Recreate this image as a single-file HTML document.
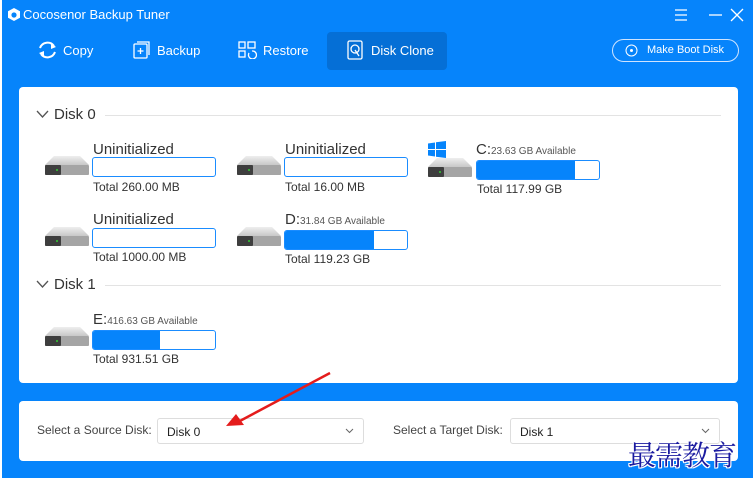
<!DOCTYPE html>
<html><head><style>
*{margin:0;padding:0;box-sizing:border-box}
body{width:753px;height:489px;background:#fff;font-family:"Liberation Sans",sans-serif;position:relative;overflow:hidden}
.bg{position:absolute;left:2px;top:0;width:751px;height:478px;background:#0684fb}
.abs{position:absolute}
.w{color:#fff}
.card{position:absolute;background:#fff;border-radius:4px}
.nav{position:absolute;top:50px;color:#fff;font-size:13px}
.t{position:absolute;font-size:15px;color:#333}
.bar{position:absolute;width:124px;height:20px;border:1px solid #1a8cff;border-radius:3px;background:#fff;overflow:hidden}
.bar i{display:block;height:100%;background:#0684fb}
.tot{position:absolute;font-size:12px;color:#333}
.small{font-size:10px;color:#555}
.hdr{position:absolute;font-size:15px;color:#333}
.drv{position:absolute;width:44px;height:22px}
.sel{position:absolute;height:26px;border:1px solid #ddd;border-radius:3px;font-size:12px;color:#222;padding:6px 9px}
</style></head><body>
<div class="bg"></div>
<svg class="abs" style="left:8px;top:8px" width="12" height="13" viewBox="0 0 12 13"><path d="M6 0L12 3.2V9.8L6 13L0 9.8V3.2Z" fill="#fff"/><circle cx="6" cy="7" r="2.6" fill="#0684fb"/></svg>
<div class="abs w" style="left:23px;top:7px;font-size:13px">Cocosenor Backup Tuner</div>
<svg class="abs" style="left:672px;top:8px" width="75" height="14"><g stroke="#fff" stroke-width="1.3" fill="none"><path d="M3 2H15M3 7H15M3 12H15"/><path d="M37 7H50"/><path d="M59 1L71 13M71 1L59 13"/></g></svg>
<svg class="abs" style="left:37px;top:40px" width="21" height="20" viewBox="0 0 21 20"><g stroke="#fff" stroke-width="2" fill="none"><path d="M3 8A8 8 0 0 1 17 6"/><path d="M18 12A8 8 0 0 1 4 14"/></g><path d="M14 3L19 7L14 9Z M7 17L2 13L7 11Z" fill="#fff"/></svg>
<div class="nav" style="left:63px;top:43px">Copy</div>
<svg class="abs" style="left:133px;top:40px" width="18" height="20"><g stroke="#fff" stroke-width="1.3" fill="none"><rect x="1" y="4" width="13" height="14" rx="1"/><path d="M4 2H16V15"/><path d="M7.5 8V14M4.5 11H10.5"/></g></svg>
<div class="nav" style="left:157px;top:43px">Backup</div>
<svg class="abs" style="left:238px;top:41px" width="19" height="18"><g stroke="#fff" stroke-width="1.3" fill="none"><rect x="1" y="1" width="6" height="6"/><rect x="10" y="1" width="7" height="6"/><rect x="1" y="10" width="6" height="6"/><path d="M11 12A4 4 0 1 0 14 10"/></g></svg>
<div class="nav" style="left:263px;top:43px">Restore</div>
<div class="abs" style="left:327px;top:32px;width:120px;height:38px;background:#056fd6;border-radius:4px"></div>
<svg class="abs" style="left:347px;top:40px" width="16" height="20"><g stroke="#fff" stroke-width="1.3" fill="none"><rect x="1" y="1" width="14" height="18" rx="1.5"/><circle cx="8" cy="9" r="4"/><path d="M8 10L12 16"/></g></svg>
<div class="nav" style="left:371px;top:43px">Disk Clone</div>
<div class="abs" style="left:612px;top:39px;width:127px;height:23px;border:1px solid #cfe4ff;border-radius:12px"></div>
<svg class="abs" style="left:625px;top:44px" width="13" height="13"><circle cx="6.5" cy="6.5" r="5.5" stroke="#fff" fill="none"/><circle cx="6.5" cy="6.5" r="1.5" fill="#fff"/></svg>
<div class="abs w" style="left:647px;top:44px;font-size:11px">Make Boot Disk</div>
<div class="card" style="left:19px;top:87px;width:719px;height:296px"></div>
<svg class="abs" style="left:36px;top:110px" width="13" height="9"><path d="M1 1L6.5 7L12 1" stroke="#555" stroke-width="1.3" fill="none"/></svg>
<div class="hdr" style="left:54px;top:106px">Disk 0</div>
<div class="abs" style="left:105px;top:115px;width:616px;height:1px;background:#e3e3e3"></div>
<svg class="abs" style="left:36px;top:280px" width="13" height="9"><path d="M1 1L6.5 7L12 1" stroke="#555" stroke-width="1.3" fill="none"/></svg>
<div class="hdr" style="left:54px;top:276px">Disk 1</div>
<div class="abs" style="left:105px;top:285px;width:616px;height:1px;background:#e3e3e3"></div>

<svg width="0" height="0" style="position:absolute"><defs><linearGradient id="g" x1="0" y1="0" x2="0" y2="1"><stop offset="0" stop-color="#eee"/><stop offset="1" stop-color="#c8c8c8"/></linearGradient><g id="d"><path d="M9 2H35L44 11H0Z" fill="url(#g)"/><rect x="0" y="11" width="44" height="10" rx="1" fill="#a5a5a5"/><rect x="0" y="11" width="16" height="10" rx="1" fill="#3e3e3e"/><circle cx="12" cy="16" r="1" fill="#3c3"/></g></defs></svg>

<svg class="drv" style="left:45px;top:154px"><use href="#d"/></svg>
<div class="t" style="left:93px;top:141px">Uninitialized</div>
<div class="bar" style="left:92px;top:157px"></div>
<div class="tot" style="left:93px;top:180px">Total 260.00 MB</div>

<svg class="drv" style="left:237px;top:154px"><use href="#d"/></svg>
<div class="t" style="left:285px;top:141px">Uninitialized</div>
<div class="bar" style="left:284px;top:157px"></div>
<div class="tot" style="left:285px;top:180px">Total 16.00 MB</div>

<svg class="abs" style="left:428px;top:141px" width="18" height="18"><g fill="#0684fb"><path d="M0 2.5L7 1.5V8H0Z M8 1.3L18 0V8H8Z M0 9H7V15.5L0 14.5Z M8 9H18V17L8 15.7Z"/></g></svg>
<svg class="drv" style="left:428px;top:156px"><use href="#d"/></svg>
<div class="t" style="left:476px;top:141px">C:<span class="small">23.63 GB Available</span></div>
<div class="bar" style="left:476px;top:160px"><i style="width:98px"></i></div>
<div class="tot" style="left:477px;top:182px">Total 117.99 GB</div>

<svg class="drv" style="left:45px;top:225px"><use href="#d"/></svg>
<div class="t" style="left:93px;top:211px">Uninitialized</div>
<div class="bar" style="left:92px;top:228px"></div>
<div class="tot" style="left:93px;top:250px">Total 1000.00 MB</div>

<svg class="drv" style="left:237px;top:225px"><use href="#d"/></svg>
<div class="t" style="left:285px;top:211px">D:<span class="small">31.84 GB Available</span></div>
<div class="bar" style="left:284px;top:230px"><i style="width:89px"></i></div>
<div class="tot" style="left:285px;top:252px">Total 119.23 GB</div>

<svg class="drv" style="left:45px;top:325px"><use href="#d"/></svg>
<div class="t" style="left:93px;top:311px">E:<span class="small">416.63 GB Available</span></div>
<div class="bar" style="left:92px;top:330px"><i style="width:67px"></i></div>
<div class="tot" style="left:93px;top:352px">Total 931.51 GB</div>

<div class="card" style="left:19px;top:401px;width:719px;height:60px"></div>
<div class="abs" style="left:37px;top:423px;font-size:12px;color:#444">Select a Source Disk:</div>
<div class="sel" style="left:157px;top:418px;width:207px">Disk 0</div>
<svg class="abs" style="left:345px;top:428px" width="9" height="6"><path d="M1 1L4.5 4.5L8 1" stroke="#666" fill="none"/></svg>
<div class="abs" style="left:393px;top:423px;font-size:12px;color:#444">Select a Target Disk:</div>
<div class="sel" style="left:510px;top:418px;width:210px">Disk 1</div>
<svg class="abs" style="left:701px;top:428px" width="9" height="6"><path d="M1 1L4.5 4.5L8 1" stroke="#666" fill="none"/></svg>
<svg class="abs" style="left:220px;top:370px" width="115" height="60"><path d="M110 3L18 52" stroke="#e41c1c" stroke-width="2.5"/><path d="M6 56L16 44L24 55Z" fill="#e41c1c"/></svg>
<div class="abs" style="left:628px;top:434px;font-size:28px;line-height:40px;color:#1a1aa0;font-family:'Noto Serif CJK SC',serif;letter-spacing:-1px;text-shadow:1px 0 0 #fff,-1px 0 0 #fff,0 1px 0 #fff,0 -1px 0 #fff,1px 1px 0 #fff,-1px -1px 0 #fff,1px -1px 0 #fff,-1px 1px 0 #fff">最需教育</div>
</body></html>
